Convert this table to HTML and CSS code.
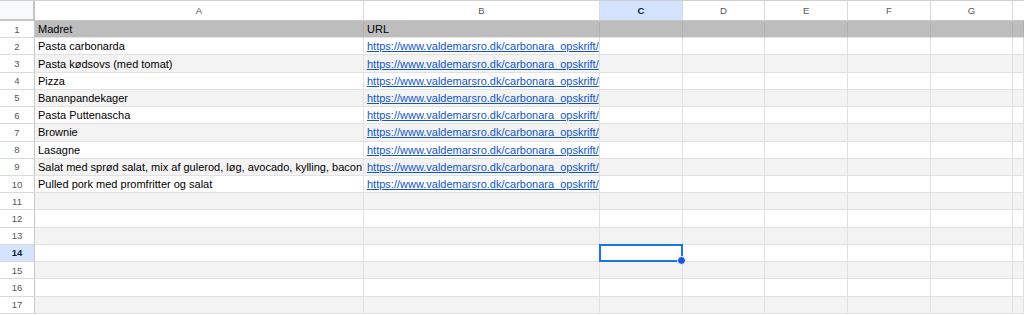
FILE: index.html
```html
<!DOCTYPE html>
<html>
<head>
<meta charset="utf-8">
<link rel="stylesheet" href="styles.css">
</head>
<body>
<div class="sheet">
  <div class="corner"></div>
  <div class="ch">A</div><div class="ch">B</div><div class="ch sel">C</div><div class="ch">D</div><div class="ch">E</div><div class="ch">F</div><div class="ch">G</div><div class="ch last"></div>

  <div class="rh">1</div><div class="c hd">Madret</div><div class="c hd">URL</div><div class="c hd"></div><div class="c hd"></div><div class="c hd"></div><div class="c hd"></div><div class="c hd"></div><div class="c hd"></div>

  <div class="rh">2</div><div class="c">Pasta carbonarda</div><div class="c"><a class="lnk">https://www.valdemarsro.dk/carbonara_opskrift/</a></div><div class="c"></div><div class="c"></div><div class="c"></div><div class="c"></div><div class="c"></div><div class="c"></div>

  <div class="rh">3</div><div class="c alt">Pasta kødsovs (med tomat)</div><div class="c alt"><a class="lnk">https://www.valdemarsro.dk/carbonara_opskrift/</a></div><div class="c alt"></div><div class="c alt"></div><div class="c alt"></div><div class="c alt"></div><div class="c alt"></div><div class="c alt"></div>

  <div class="rh">4</div><div class="c">Pizza</div><div class="c"><a class="lnk">https://www.valdemarsro.dk/carbonara_opskrift/</a></div><div class="c"></div><div class="c"></div><div class="c"></div><div class="c"></div><div class="c"></div><div class="c"></div>

  <div class="rh">5</div><div class="c alt">Bananpandekager</div><div class="c alt"><a class="lnk">https://www.valdemarsro.dk/carbonara_opskrift/</a></div><div class="c alt"></div><div class="c alt"></div><div class="c alt"></div><div class="c alt"></div><div class="c alt"></div><div class="c alt"></div>

  <div class="rh">6</div><div class="c">Pasta Puttenascha</div><div class="c"><a class="lnk">https://www.valdemarsro.dk/carbonara_opskrift/</a></div><div class="c"></div><div class="c"></div><div class="c"></div><div class="c"></div><div class="c"></div><div class="c"></div>

  <div class="rh">7</div><div class="c alt">Brownie</div><div class="c alt"><a class="lnk">https://www.valdemarsro.dk/carbonara_opskrift/</a></div><div class="c alt"></div><div class="c alt"></div><div class="c alt"></div><div class="c alt"></div><div class="c alt"></div><div class="c alt"></div>

  <div class="rh">8</div><div class="c">Lasagne</div><div class="c"><a class="lnk">https://www.valdemarsro.dk/carbonara_opskrift/</a></div><div class="c"></div><div class="c"></div><div class="c"></div><div class="c"></div><div class="c"></div><div class="c"></div>

  <div class="rh">9</div><div class="c alt">Salat med sprød salat, mix af gulerod, løg, avocado, kylling, bacon</div><div class="c alt"><a class="lnk">https://www.valdemarsro.dk/carbonara_opskrift/</a></div><div class="c alt"></div><div class="c alt"></div><div class="c alt"></div><div class="c alt"></div><div class="c alt"></div><div class="c alt"></div>

  <div class="rh">10</div><div class="c">Pulled pork med promfritter og salat</div><div class="c"><a class="lnk">https://www.valdemarsro.dk/carbonara_opskrift/</a></div><div class="c"></div><div class="c"></div><div class="c"></div><div class="c"></div><div class="c"></div><div class="c"></div>

  <div class="rh">11</div><div class="c alt"></div><div class="c alt"></div><div class="c alt"></div><div class="c alt"></div><div class="c alt"></div><div class="c alt"></div><div class="c alt"></div><div class="c alt"></div>

  <div class="rh">12</div><div class="c"></div><div class="c"></div><div class="c"></div><div class="c"></div><div class="c"></div><div class="c"></div><div class="c"></div><div class="c"></div>

  <div class="rh">13</div><div class="c alt"></div><div class="c alt"></div><div class="c alt"></div><div class="c alt"></div><div class="c alt"></div><div class="c alt"></div><div class="c alt"></div><div class="c alt"></div>

  <div class="rh sel">14</div><div class="c"></div><div class="c"></div><div class="c active"><span class="handle"></span></div><div class="c"></div><div class="c"></div><div class="c"></div><div class="c"></div><div class="c"></div>

  <div class="rh">15</div><div class="c alt"></div><div class="c alt"></div><div class="c alt"></div><div class="c alt"></div><div class="c alt"></div><div class="c alt"></div><div class="c alt"></div><div class="c alt"></div>

  <div class="rh">16</div><div class="c"></div><div class="c"></div><div class="c"></div><div class="c"></div><div class="c"></div><div class="c"></div><div class="c"></div><div class="c"></div>

  <div class="rh">17</div><div class="c alt"></div><div class="c alt"></div><div class="c alt"></div><div class="c alt"></div><div class="c alt"></div><div class="c alt"></div><div class="c alt"></div><div class="c alt"></div>
</div>
</body>
</html>
```

FILE: styles.css
```css
html, body {
  margin: 0;
  padding: 0;
  background: #ffffff;
  overflow: hidden;
}

.sheet {
  display: grid;
  grid-template-columns: 35px 329px 236px 82.67px 82.67px 82.67px 82.67px 82.67px 1fr;
  grid-template-rows: 20px repeat(17, 17.22px);
  width: 1024px;
  border-top: 1px solid #d0d0d0;
  box-sizing: border-box;
  font-family: "Liberation Sans", Arial, sans-serif;
}

.sheet > div {
  box-sizing: border-box;
  min-width: 0;
}

.corner {
  background: #f8f9fa;
  border-right: 2px solid #c4c4c4;
  border-bottom: 2px solid #c4c4c4;
}

.ch {
  background: #ffffff;
  border-right: 1px solid #dadada;
  border-bottom: 1px solid #c8c8c8;
  color: #575757;
  font-size: 9.5px;
  display: flex;
  align-items: center;
  justify-content: center;
}

.ch.sel {
  background: #d3e3fd;
  color: #0b1f44;
  font-weight: bold;
}

.ch.last {
  border-right: none;
}

.rh {
  background: #ffffff;
  border-right: 1px solid #c8c8c8;
  border-bottom: 1px solid #dadada;
  color: #575757;
  font-size: 9.5px;
  display: flex;
  align-items: center;
  justify-content: center;
}

.rh.sel {
  background: #d3e3fd;
  color: #0b1f44;
  font-weight: bold;
}

.c {
  background: #ffffff;
  border-right: 1px solid #e1e1e1;
  border-bottom: 1px solid #e1e1e1;
  font-size: 11px;
  color: #000000;
  display: flex;
  align-items: center;
  padding-left: 3px;
  white-space: nowrap;
  overflow: hidden;
}

.c.alt {
  background: #f3f3f3;
}

.c.hd {
  background: #bdbdbd;
  border-right-color: #b0b0b0;
  border-bottom-color: #e1e1e1;
}

.lnk {
  color: #1155cc;
  text-decoration: underline;
}

.c.active {
  position: relative;
  overflow: visible;
  border: 2px solid #1a73e8;
  margin: -1px 0 0 -1px;
  z-index: 2;
}

.handle {
  position: absolute;
  right: -5px;
  bottom: -5px;
  width: 7px;
  height: 7px;
  border-radius: 50%;
  background: #1a56d6;
  border: 1px solid #ffffff;
}
```
